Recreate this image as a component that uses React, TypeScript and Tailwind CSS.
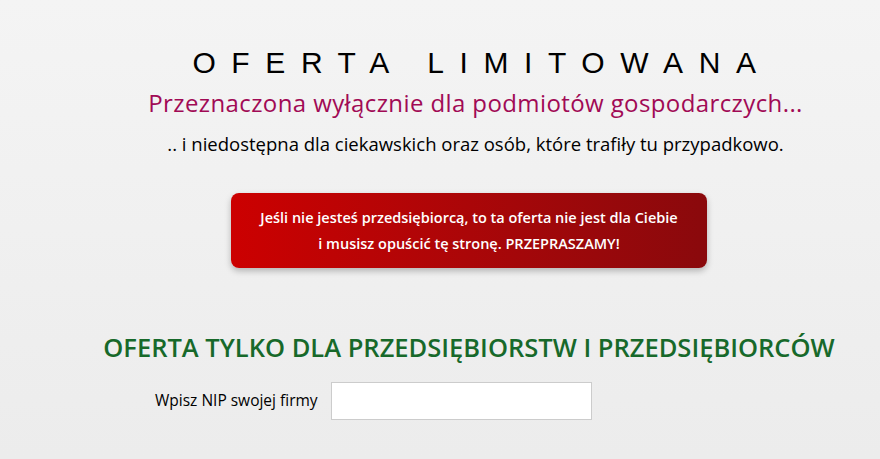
export default function App() {
	return (
		<div className="w-[880px] h-[459px] overflow-hidden bg-gradient-to-b from-[#f4f4f4] to-[#ececec] font-['Open_Sans',sans-serif]">
			<div className="flex flex-col items-center pl-[58px] pt-[44px]">
				<h1 className="ml-[26px] h-[38px] font-['Liberation_Sans',Arial,sans-serif] text-[30px] leading-[38px] tracking-[0.52em] text-black">
					OFERTA LIMITOWANA
				</h1>
				<h2 className="ml-[13px] mt-[6px] text-[24px] leading-[30px] tracking-[0.4px] text-[#a10a55]">
					Przeznaczona wyłącznie dla podmiotów gospodarczych...
				</h2>
				<p className="ml-[13px] mt-[13px] text-[18.5px] leading-[26px] text-black">
					.. i niedostępna dla ciekawskich oraz osób, które trafiły tu przypadkowo.
				</p>
				<div className="mt-[36px] flex h-[75px] w-[476px] flex-col items-center justify-center rounded-[8px] bg-gradient-to-r from-[#cc0000] to-[#8a090c] text-[14.5px] font-semibold leading-[26px] text-white shadow-[0_3px_6px_rgba(0,0,0,0.25)]">
					<span>Jeśli nie jesteś przedsiębiorcą, to ta oferta nie jest dla Ciebie</span>
					<span>i musisz opuścić tę stronę. PRZEPRASZAMY!</span>
				</div>
				<h3 className="mt-[63px] text-[25.5px] font-semibold leading-[32px] text-[#17692a]">
					OFERTA TYLKO DLA PRZEDSIĘBIORSTW I PRZEDSIĘBIORCÓW
				</h3>
				<div className="mt-[19px] flex items-center gap-[13px] self-start pl-[97px]">
					<label className="text-[15.5px] text-black">Wpisz NIP swojej firmy</label>
					<input className="h-[38px] w-[261px] border border-[#cccccc] bg-white" />
				</div>
			</div>
		</div>
	);
}
